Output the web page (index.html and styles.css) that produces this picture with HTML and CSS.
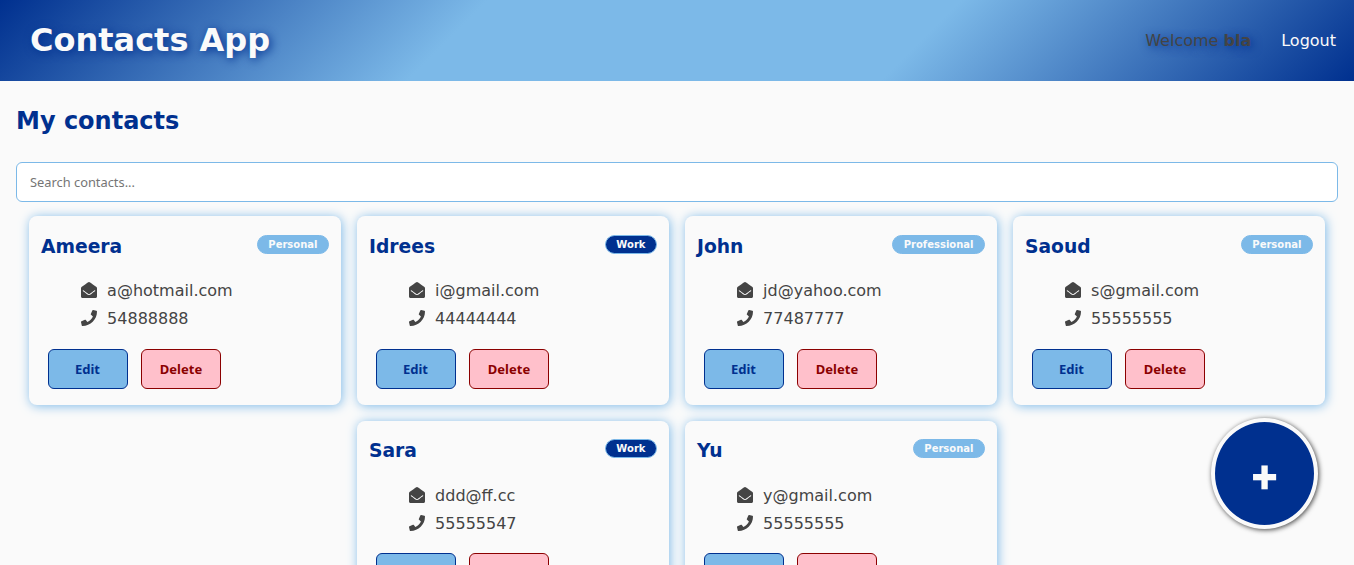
FILE: index.html
```html
<!DOCTYPE html>
<html lang="en">
<head>
<meta charset="utf-8">
<title>Contacts App</title>
<link rel="stylesheet" href="styles.css">
</head>
<body>
<svg class="defs" aria-hidden="true">
  <symbol id="mail" viewBox="0 0 512 512"><path d="M512 464c0 26.510-21.490 48-48 48H48c-26.510 0-48-21.490-48-48V200.724a48 48 0 0 1 18.387-37.776c24.913-19.529 45.501-35.365 164.200-121.511C199.412 29.170 232.797-.347 256 .003c23.198-.354 56.596 29.172 73.413 41.433 118.687 86.137 139.303 101.995 164.200 121.512A48 48 0 0 1 512 200.724V464zm-65.666-196.605c-2.563-3.728-7.700-4.595-11.339-1.907-22.845 16.873-55.462 40.705-105.582 77.079-16.825 12.266-50.210 41.781-73.413 41.430-23.211.344-56.559-29.143-73.413-41.430-50.114-36.370-82.734-60.204-105.582-77.079-3.639-2.688-8.776-1.821-11.339 1.907l-9.072 13.196a7.998 7.998 0 0 0 1.839 10.967c22.887 16.899 55.454 40.690 105.303 76.868 20.274 14.781 56.524 47.813 92.264 47.573 35.724.242 71.961-32.771 92.263-47.573 49.850-36.179 82.418-59.970 105.303-76.868a7.998 7.998 0 0 0 1.839-10.967l-9.071-13.196z"/></symbol>
  <symbol id="phone" viewBox="0 0 512 512"><path d="M493.400 24.600l-104-24c-11.300-2.600-22.900 3.300-27.500 13.900l-48 112c-4.200 9.800-1.400 21.300 6.900 28l60.600 49.600c-36 76.700-98.900 140.500-177.200 177.200l-49.600-60.600c-6.800-8.300-18.200-11.100-28-6.900l-112 48C3.900 366.500-2 378.100.6 389.400l24 104C27.100 504.200 36.700 512 48 512c256.100 0 464-207.500 464-464 0-11.200-7.700-20.900-18.600-23.400z"/></symbol>
</svg>
<header class="topbar">
  <h1 class="brand">Contacts App</h1>
  <nav class="nav">
    <span class="welcome">Welcome <b>bla</b></span>
    <a class="logout">Logout</a>
  </nav>
</header>
<main class="page">
  <h2 class="title">My contacts</h2>
  <input class="search" type="text" placeholder="Search contacts...">
  <section class="cards">
    <article class="card">
      <div class="head"><h3 class="name">Ameera</h3><span class="badge">Personal</span></div>
      <ul class="info"><li><svg class="icon"><use href="#mail"/></svg>a@hotmail.com</li><li><svg class="icon"><use href="#phone"/></svg>54888888</li></ul>
      <div class="actions"><button class="btn">Edit</button><button class="btn delete">Delete</button></div>
    </article>
    <article class="card">
      <div class="head"><h3 class="name">Idrees</h3><span class="badge work">Work</span></div>
      <ul class="info"><li><svg class="icon"><use href="#mail"/></svg>i@gmail.com</li><li><svg class="icon"><use href="#phone"/></svg>44444444</li></ul>
      <div class="actions"><button class="btn">Edit</button><button class="btn delete">Delete</button></div>
    </article>
    <article class="card">
      <div class="head"><h3 class="name">John</h3><span class="badge">Professional</span></div>
      <ul class="info"><li><svg class="icon"><use href="#mail"/></svg>jd@yahoo.com</li><li><svg class="icon"><use href="#phone"/></svg>77487777</li></ul>
      <div class="actions"><button class="btn">Edit</button><button class="btn delete">Delete</button></div>
    </article>
    <article class="card">
      <div class="head"><h3 class="name">Saoud</h3><span class="badge">Personal</span></div>
      <ul class="info"><li><svg class="icon"><use href="#mail"/></svg>s@gmail.com</li><li><svg class="icon"><use href="#phone"/></svg>55555555</li></ul>
      <div class="actions"><button class="btn">Edit</button><button class="btn delete">Delete</button></div>
    </article>
    <article class="card">
      <div class="head"><h3 class="name">Sara</h3><span class="badge work">Work</span></div>
      <ul class="info"><li><svg class="icon"><use href="#mail"/></svg>ddd@ff.cc</li><li><svg class="icon"><use href="#phone"/></svg>55555547</li></ul>
      <div class="actions"><button class="btn" aria-label="Edit"></button><button class="btn delete" aria-label="Delete"></button></div>
    </article>
    <article class="card">
      <div class="head"><h3 class="name">Yu</h3><span class="badge">Personal</span></div>
      <ul class="info"><li><svg class="icon"><use href="#mail"/></svg>y@gmail.com</li><li><svg class="icon"><use href="#phone"/></svg>55555555</li></ul>
      <div class="actions"><button class="btn" aria-label="Edit"></button><button class="btn delete" aria-label="Delete"></button></div>
    </article>
  </section>
</main>
<button class="add" aria-label="Add contact">+</button>
</body>
</html>
```
FILE: styles.css
```css
* { box-sizing: border-box; }
html { height: 100%; overflow: hidden; }
body {
  margin: 0;
  height: 100%;
  overflow: hidden;
  background: #fafafa;
  color: #444;
  font: 16px/19px "DejaVu Sans", sans-serif;
}
.defs { display: none; }
.topbar {
  display: flex;
  align-items: center;
  justify-content: space-between;
  height: 81px;
  padding: 0 18px 0 30px;
  background: linear-gradient(135deg, #00308f, #7cb9e8 34%, #7cb9e8 67%, #00308f);
}
.brand {
  margin: 0 0 2px;
  color: #fafafa;
  font-size: 32px;
  line-height: 38px;
  text-shadow: 2px 2px 10px #00308f;
}
.nav { display: flex; gap: 30px; }
.welcome { text-shadow: 2px 2px 10px #00308f; }
.logout { color: #fafafa; }
.page { padding: 0 16px; }
.title {
  margin: 0;
  padding: 26px 0 27px;
  color: #00308f;
  font-size: 24px;
  line-height: 28px;
}
.search {
  display: block;
  width: 100%;
  height: 40px;
  padding: 0 13px;
  border: 1px solid #7cb9e8;
  border-radius: 6px;
  background: #fff;
  font: 12.85px "Noto Sans", sans-serif;
}
.search::placeholder { color: #757575; }
.cards {
  display: flex;
  flex-wrap: wrap;
  justify-content: center;
  gap: 16px;
  padding-top: 14px;
}
.card {
  width: 312px;
  height: 188.5px;
  padding: 18.5px 12px 0;
  border-radius: 8px;
  background: #fafafa;
  box-shadow: 1px 1px 11px #7cb9e8;
}
.head {
  display: flex;
  align-items: flex-start;
  justify-content: space-between;
}
.name {
  margin: 1px 0 0;
  color: #00308f;
  font-size: 18.72px;
  line-height: 22px;
}
.badge {
  height: 19px;
  padding: 0 10.5px;
  border: 1px solid #7cb9e8;
  border-radius: 10px;
  background: #7cb9e8;
  color: #fafafa;
  font-size: 10px;
  font-weight: bold;
  line-height: 17px;
}
.badge.work { background: #00308f; }
.info {
  display: grid;
  gap: 9px;
  margin: 0;
  padding: 23.5px 0 0 40px;
  list-style: none;
}
.info li { display: flex; align-items: center; gap: 10.1px; }
.icon { width: 16px; height: 16px; margin-bottom: 1px; fill: #444; }
.actions { display: flex; gap: 13px; padding: 20.5px 0 0 7px; }
.btn {
  width: 80px;
  height: 40px;
  padding: 0 1px 0 0;
  border: 1px solid #00308f;
  border-radius: 6px;
  background: #7cb9e8;
  color: #00308f;
  font: bold 13px "Noto Sans", sans-serif;
}
.btn.delete { padding: 0; border-color: #8b0000; background: #ffc0cb; color: #8b0000; }
.add {
  position: fixed;
  right: 36px;
  bottom: 36px;
  width: 107px;
  height: 111px;
  padding: 6px 0 0;
  border: 4px solid #fafafa;
  border-radius: 50%;
  background: #00308f;
  color: #fafafa;
  box-shadow: 1px 1px 5px #444;
  font: bold 33px "DejaVu Sans", sans-serif;
  -webkit-text-stroke: 2.4px #fafafa;
}
```
